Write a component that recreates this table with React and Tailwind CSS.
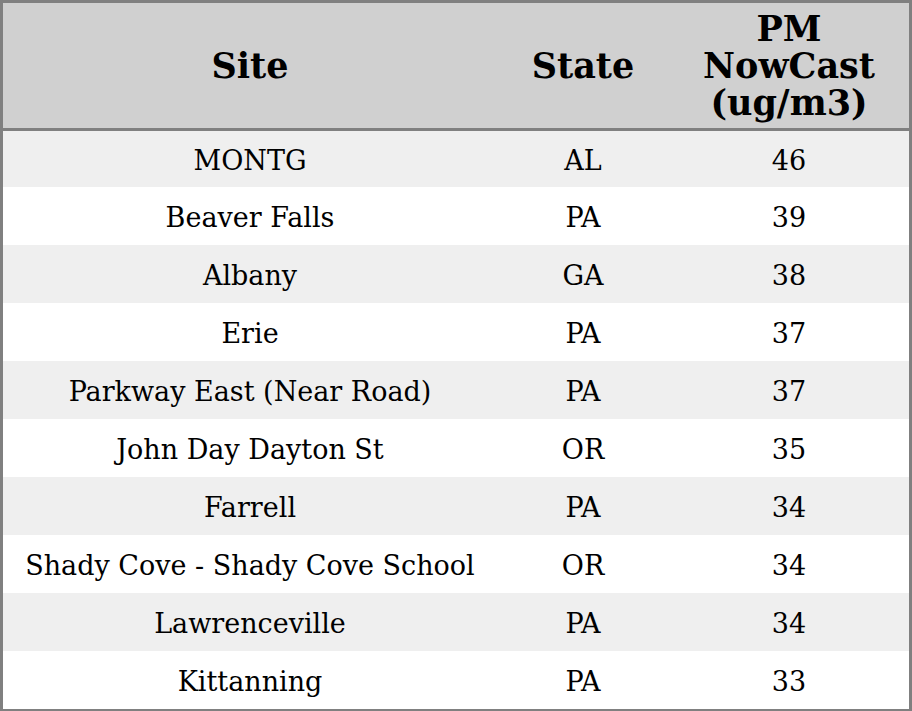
const rows = [
  ["MONTG", "AL", "46"],
  ["Beaver Falls", "PA", "39"],
  ["Albany", "GA", "38"],
  ["Erie", "PA", "37"],
  ["Parkway East (Near Road)", "PA", "37"],
  ["John Day Dayton St", "OR", "35"],
  ["Farrell", "PA", "34"],
  ["Shady Cove - Shady Cove School", "OR", "34"],
  ["Lawrenceville", "PA", "34"],
  ["Kittanning", "PA", "33"],
];

export default function App() {
  return (
    <div className="w-[912px] h-[711px] bg-white [font-family:'DejaVu_Serif',serif] text-black">
      <div className="w-[912px] h-[711px] border-[3px] border-[#808080] flex flex-col">
        <div className="h-[128px] shrink-0 bg-[#d0d0d0] border-b-[3px] border-[#808080] grid grid-cols-[494px_172px_1fr] items-center text-center font-bold text-[35px] leading-[37px]">
          <div>Site</div>
          <div>State</div>
          <div>PM<br />NowCast<br />(ug/m3)</div>
        </div>
        {rows.map((r, i) => (
          <div
            key={i}
            className={`${i === 0 ? "h-[56px]" : "h-[58px]"} shrink-0 grid grid-cols-[494px_172px_1fr] items-center text-center text-[27px] pt-[4px] ${i % 2 === 0 ? "bg-[#efefef]" : "bg-white"}`}
          >
            <div>{r[0]}</div>
            <div>{r[1]}</div>
            <div>{r[2]}</div>
          </div>
        ))}
      </div>
    </div>
  );
}
